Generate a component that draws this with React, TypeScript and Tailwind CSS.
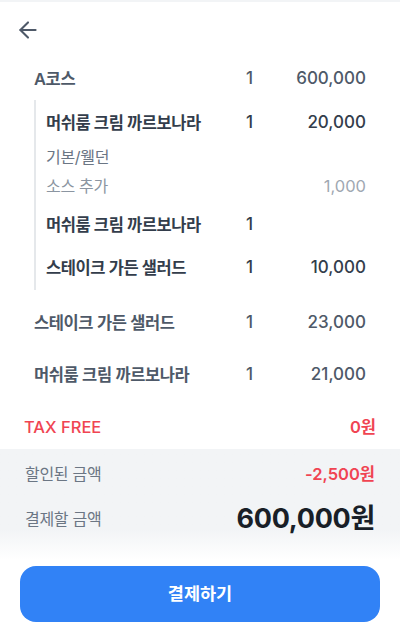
import React from "react";
import { ArrowLeft } from "lucide-react";

function MainRow({ name, qty, amount, h, nameCls, amtCls }: { name: string; qty?: string; amount?: string; h: string; nameCls: string; amtCls: string }) {
  return (
    <div className={`flex items-center ${h}`}>
      <div className={`flex-1 text-[16.5px] tracking-[-0.4px] ${nameCls}`}>{name}</div>
      <div className="flex w-[120px] items-center">
        <div className={`w-[30px] text-[17px] ${amtCls}`}>{qty}</div>
        <div className={`flex-1 text-right text-[17px] ${amtCls}`}>{amount}</div>
      </div>
    </div>
  );
}

export default function App() {
  return (
    <div className="flex h-[640px] w-[400px] flex-col overflow-hidden bg-white font-['Inter','Noto_Sans_CJK_KR',sans-serif]">
      <div className="h-[2px] bg-[#f2f4f6]" />
      <div className="flex h-[56px] items-center pl-[15px]">
        <ArrowLeft size={26} strokeWidth={1.9} color="#4e5968" />
      </div>

      <div className="px-[34px]">
        <MainRow
          name="A코스"
          qty="1"
          amount="600,000"
          h="h-[42px]"
          nameCls="font-semibold text-[#4e5968]"
          amtCls="font-medium text-[#4e5968]"
        />
        <div className="border-l-2 border-[#e5e8eb] pl-[10px]">
          <MainRow
            name="머쉬룸 크림 까르보나라"
            qty="1"
            amount="20,000"
            h="h-[46px]"
            nameCls="font-bold text-[#333d4b]"
            amtCls="font-medium text-[#333d4b]"
          />
          <div className="flex h-[22px] items-center text-[16px] tracking-[-0.3px] text-[#6b7684]">기본/웰던</div>
          <div className="flex h-[36px] items-center">
            <div className="flex-1 text-[16px] tracking-[-0.3px] text-[#8b95a1]">소스 추가</div>
            <div className="text-[16.5px] text-[#a0a8b2]">1,000</div>
          </div>
          <MainRow
            name="머쉬룸 크림 까르보나라"
            qty="1"
            h="h-[42px]"
            nameCls="font-bold text-[#333d4b]"
            amtCls="font-medium text-[#333d4b]"
          />
          <MainRow
            name="스테이크 가든 샐러드"
            qty="1"
            amount="10,000"
            h="h-[44px]"
            nameCls="font-bold text-[#333d4b]"
            amtCls="font-medium text-[#333d4b]"
          />
        </div>
        <div className="pt-[7px]">
          <MainRow
            name="스테이크 가든 샐러드"
            qty="1"
            amount="23,000"
            h="h-[52px]"
            nameCls="font-semibold text-[#4e5968]"
            amtCls="font-medium text-[#4e5968]"
          />
          <MainRow
            name="머쉬룸 크림 까르보나라"
            qty="1"
            amount="21,000"
            h="h-[52px]"
            nameCls="font-semibold text-[#4e5968]"
            amtCls="font-medium text-[#4e5968]"
          />
        </div>
      </div>

      <div className="mt-[4px] flex h-[44px] items-center justify-between px-[24px] text-[#f04452]">
        <div className="text-[16.5px] font-medium">TAX FREE</div>
        <div className="text-[16.5px] font-semibold">0원</div>
      </div>

      <div className="bg-gradient-to-b from-[#f2f4f6] via-[#f2f4f6] via-[72%] to-white px-[25px] pb-[17px] pt-[4px]">
        <div className="flex h-[42px] items-center justify-between">
          <div className="text-[16px] tracking-[-0.3px] text-[#6b7684]">할인된 금액</div>
          <div className="text-[16.5px] font-semibold text-[#f04452]">-2,500원</div>
        </div>
        <div className="flex h-[48px] items-center justify-between">
          <div className="text-[16px] tracking-[-0.3px] text-[#6b7684]">결제할 금액</div>
          <div className="text-[27px] font-bold tracking-[-0.3px] text-[#191f28]">600,000원</div>
        </div>
      </div>

      <div className="mt-[6px] px-[20px]">
        <button className="flex h-[56px] w-full items-center justify-center rounded-[16px] bg-[#3182f6] text-[17.5px] font-semibold text-white">
          결제하기
        </button>
      </div>
    </div>
  );
}
